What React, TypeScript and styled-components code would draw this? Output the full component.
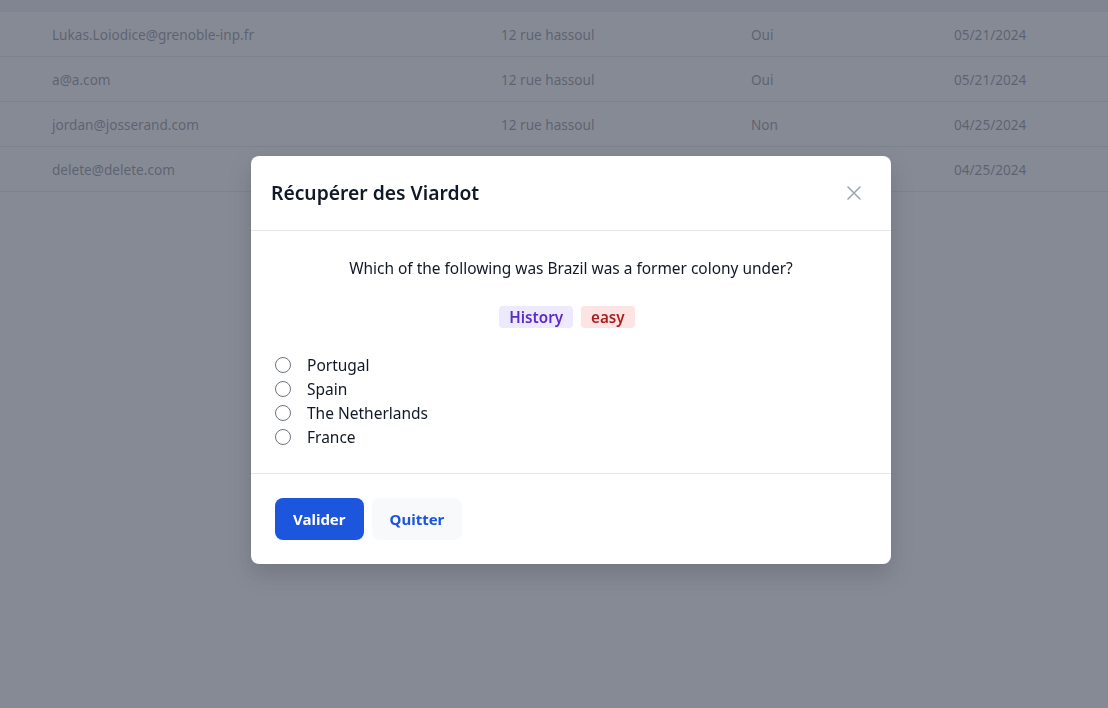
import React from "react";
import styled, { createGlobalStyle } from "styled-components";

const Global = createGlobalStyle`
  html, body { margin: 0; padding: 0; }
  body {
    font-family: "Noto Sans", "Open Sans", sans-serif;
    background: #ffffff;
    width: 1108px;
    height: 708px;
    overflow: hidden;
  }
`;

const Page = styled.div`
  width: 1108px;
  height: 708px;
  background: #ffffff;
`;

const HeadStrip = styled.div`
  height: 12px;
  background: #dfe1e7;
`;

const Row = styled.div`
  display: grid;
  grid-template-columns: 449px 250px 203px 1fr;
  align-items: center;
  height: 44px;
  padding-left: 52px;
  border-bottom: 1px solid #d0d3da;
  font-size: 13.6px;
  color: #1f2633;
`;

const Cell = styled.div`
  white-space: nowrap;
`;

const Overlay = styled.div`
  position: fixed;
  inset: 0;
  background: rgba(107, 112, 126, 0.82);
  display: flex;
  align-items: center;
  justify-content: center;
  padding: 12px 0 0 34px;
`;

const Modal = styled.div`
  width: 640px;
  background: #ffffff;
  border-radius: 8px;
  box-shadow: 0 10px 25px rgba(0, 0, 0, 0.15);
  display: flex;
  flex-direction: column;
`;

const Header = styled.div`
  display: flex;
  align-items: center;
  justify-content: space-between;
  height: 75px;
  padding: 0 24px 0 20px;
  border-bottom: 1px solid #e5e7eb;
  box-sizing: border-box;
`;

const Title = styled.h3`
  margin: 0;
  font-size: 19.3px;
  font-weight: 600;
  color: #111827;
  line-height: 28px;
`;

const CloseBtn = styled.button`
  border: none;
  background: transparent;
  padding: 4px;
  margin-right: 2px;
  display: flex;
  cursor: pointer;
  color: #9ca3af;
`;

const Body = styled.div`
  display: flex;
  flex-direction: column;
  padding: 25px 24px 24px;
  border-bottom: 1px solid #e5e7eb;
`;

const Question = styled.p`
  margin: 0;
  text-align: center;
  font-size: 15.45px;
  line-height: 24px;
  color: #111827;
`;

const Tags = styled.div`
  display: flex;
  justify-content: center;
  margin-top: 26px;
`;

const Tag = styled.span<{ $bg: string; $fg: string }>`
  background: ${(p) => p.$bg};
  color: ${(p) => p.$fg};
  font-size: 15.2px;
  font-weight: 600;
  line-height: 22px;
  padding: 0 10px;
  margin-right: 8px;
  border-radius: 4px;
`;

const Options = styled.div`
  display: flex;
  flex-direction: column;
  margin-top: 25px;
`;

const Option = styled.label`
  display: flex;
  align-items: center;
  gap: 16px;
  height: 24px;
  font-size: 15.5px;
  color: #111827;
`;

const Radio = styled.input`
  appearance: none;
  width: 16px;
  height: 16px;
  margin: 0;
  border: 1px solid #6b7280;
  border-radius: 50%;
  background: #fff;
`;

const Footer = styled.div`
  display: flex;
  gap: 8px;
  padding: 24px 24px 24px;
`;

const Button = styled.button<{ $primary?: boolean }>`
  height: 42px;
  padding: 0 18px;
  border: none;
  border-radius: 8px;
  font-family: inherit;
  font-size: 15px;
  font-weight: 700;
  background: ${(p) => (p.$primary ? "#1c56dc" : "#f8f9fa")};
  color: ${(p) => (p.$primary ? "#ffffff" : "#1c56dc")};
  cursor: pointer;
`;

const rows = [
  ["Lukas.Loiodice@grenoble-inp.fr", "12 rue hassoul", "Oui", "05/21/2024"],
  ["a@a.com", "12 rue hassoul", "Oui", "05/21/2024"],
  ["jordan@josserand.com", "12 rue hassoul", "Non", "04/25/2024"],
  ["delete@delete.com", "12 rue hassoul", "Non", "04/25/2024"],
];

const answers = ["Portugal", "Spain", "The Netherlands", "France"];

export default function App() {
  return (
    <>
      <Global />
      <Page>
        <HeadStrip />
        {rows.map((r, i) => (
          <Row key={i}>
            {r.map((c, j) => (
              <Cell key={j}>{c}</Cell>
            ))}
          </Row>
        ))}
      </Page>
      <Overlay>
        <Modal>
          <Header>
            <Title>Récupérer des Viardot</Title>
            <CloseBtn aria-label="Fermer">
              <svg width="14" height="14" viewBox="0 0 14 14" fill="none">
                <path d="M1 1L13 13M13 1L1 13" stroke="currentColor" strokeWidth="1.5" strokeLinecap="round" />
              </svg>
            </CloseBtn>
          </Header>
          <Body>
            <Question>Which of the following was Brazil was a former colony under?</Question>
            <Tags>
              <Tag $bg="#ede9fe" $fg="#5b2bc7">History</Tag>
              <Tag $bg="#fde4e4" $fg="#a82020">easy</Tag>
            </Tags>
            <Options>
              {answers.map((a) => (
                <Option key={a}>
                  <Radio type="radio" name="answer" />
                  {a}
                </Option>
              ))}
            </Options>
          </Body>
          <Footer>
            <Button $primary>Valider</Button>
            <Button>Quitter</Button>
          </Footer>
        </Modal>
      </Overlay>
    </>
  );
}
